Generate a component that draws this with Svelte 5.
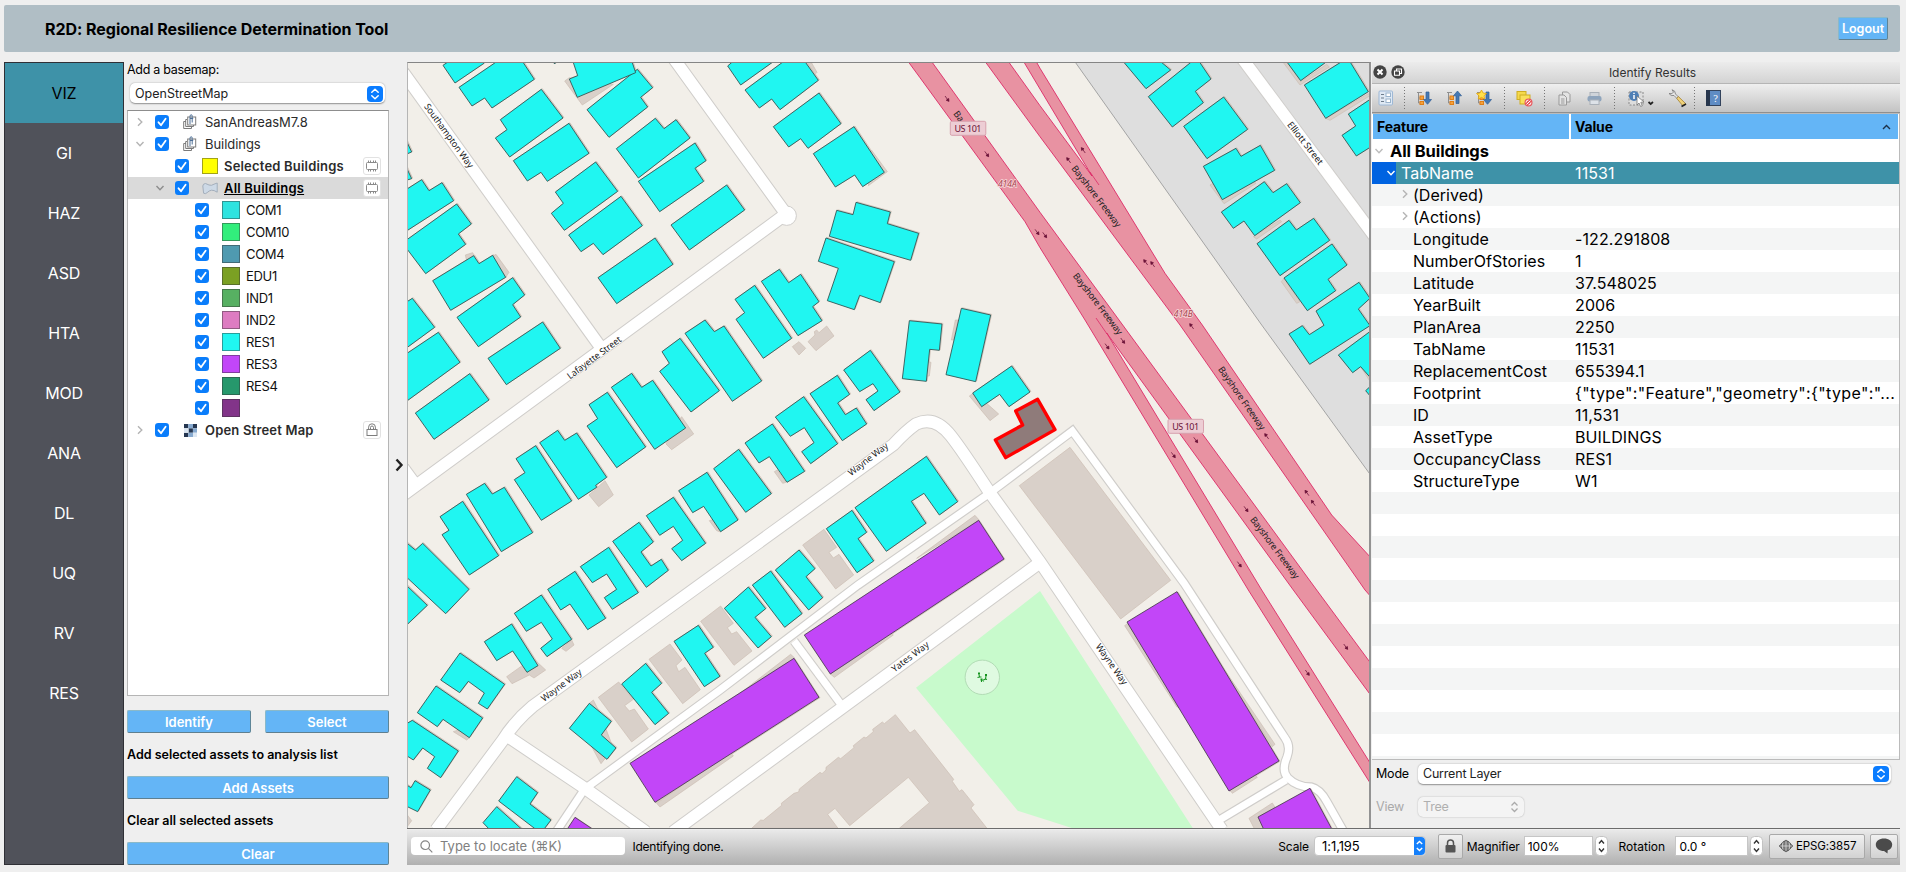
<script>
  const nav = ['VIZ', 'GI', 'HAZ', 'ASD', 'HTA', 'MOD', 'ANA', 'DL', 'UQ', 'RV', 'RES'];

  const layers = [
    { name: 'SanAndreasM7.8', depth: 0, arrow: 'right', icon: 'group' },
    { name: 'Buildings', depth: 0, arrow: 'down', icon: 'group' },
    { name: 'Selected Buildings', depth: 1, swatch: '#ffff00', small: true, bold: true, badge: 'chip' },
    { name: 'All Buildings', depth: 1, arrow: 'down', icon: 'poly', bold: true, active: true, badge: 'chip' },
    { name: 'COM1', depth: 2, swatch: '#2ee3e0' },
    { name: 'COM10', depth: 2, swatch: '#32ee7c' },
    { name: 'COM4', depth: 2, swatch: '#4f9ab0' },
    { name: 'EDU1', depth: 2, swatch: '#7ba023' },
    { name: 'IND1', depth: 2, swatch: '#57b062' },
    { name: 'IND2', depth: 2, swatch: '#dd7cc1' },
    { name: 'RES1', depth: 2, swatch: '#20f6f1' },
    { name: 'RES3', depth: 2, swatch: '#c246f8' },
    { name: 'RES4', depth: 2, swatch: '#26986c' },
    { name: '', depth: 2, swatch: '#823489' },
    { name: 'Open Street Map', depth: 0, arrow: 'right', icon: 'raster', bold: true, badge: 'lock' }
  ];

  const attributes = [
    ['(Derived)', '', true], ['(Actions)', '', true],
    ['Longitude', '-122.291808'], ['NumberOfStories', '1'], ['Latitude', '37.548025'],
    ['YearBuilt', '2006'], ['PlanArea', '2250'], ['TabName', '11531'],
    ['ReplacementCost', '655394.1'],
    ['Footprint', '{"type":"Feature","geometry":{"type":"...'],
    ['ID', '11,531'], ['AssetType', 'BUILDINGS'], ['OccupancyClass', 'RES1'], ['StructureType', 'W1']
  ];
  const blanks = Array.from({ length: 13 });

  // Map sheets: each has an origin in map pixels, points are in thirds of a pixel.
  const sheets = [
    { x: 400, y: 55, res1: [
      '129,31 145,20 255,20 252,25 165,84', '177,97 290,20 368,20 403,73 276,159 254,129 216,153',
      '424,103 489,189 329,306 286,249 321,224 301,194', '507,205 567,295 442,379 423,352 382,378 340,317',
      '587,321 653,409 493,526 454,475 490,445 466,411', '663,424 727,512 609,599 580,565 543,590 506,540',
      '765,549 819,628 650,746 594,668', '712,43 758,98 722,127 743,156 627,247 561,164',
      '519,20 533,62 508,72 532,127 707,53 696,20', '766,190 792,221 828,194 870,249 715,369 649,281',
      '885,264 918,317 885,340 911,379 779,470 715,379', '980,390 1034,465 868,585 813,510',
      '18,255 35,291 18,298', '18,335 35,371 18,376', '18,404 65,374 87,407 126,383 161,437 18,529',
      '170,447 214,507 175,537 197,568 77,656 18,578 18,556', '221,602 237,626 278,601 317,667 152,766 98,677',
      '338,668 374,720 338,749 362,786 235,875 171,787', '18,742 37,730 104,817 18,880', '459,20 469,20 464,27'
    ], tan: ['494,78 508,68 640,88 547,150', '288,598 327,652 317,667 275,605', '196,600 218,593 224,604 200,618'] },
    { x: 400, y: 320, res1: [
      '18,102 115,37 180,127 18,245', '46,279 209,161 267,240 102,358', '264,115 428,6 481,85 319,194',
      '120,590 188,544 296,707 208,765 126,644 147,631', '199,523 254,490 277,522 313,502 398,638 304,695',
      '348,416 407,377 515,543 424,601 343,479 375,458', '419,368 473,331 494,361 530,339 620,472 587,496 590,502 535,538',
      '567,254 622,217 737,381 650,443 561,318 593,296', '634,202 695,160 725,202 758,181 857,324 764,388',
      '786,95 840,55 958,212 873,276 779,154 808,130', '855,40 915,0 943,35 972,18 1085,183 997,244',
      '18,667 46,690 68,670 207,808 137,881 18,770', '836,512 921,457 1014,600 962,635 911,559 878,578',
      '941,446 1016,388 1114,521 1037,577', '739,587 820,532 917,670 845,722 815,686 848,661 820,619 779,646',
      '638,664 717,607 760,666 723,696 753,738 784,718 805,751 739,802',
      '541,740 626,682 715,818 637,868 613,833 650,808 620,762 577,788',
      '443,808 525,754 617,895 563,929 510,852 482,870'
    ], tan: ['567,525 615,482 640,525 596,560', '798,372 845,290 881,342 815,389', '928,602 940,598 962,636 950,632'] },
    { x: 400, y: 580, res1: [
      '18,15 82,76 18,137', '343,100 424,45 515,178 441,230 422,205 457,177 424,127 379,154',
      '253,185 335,132 414,257 381,277 338,213 290,242',
      '180,219 314,313 262,387 235,370 253,339 205,304 179,338 122,300',
      '108,318 248,414 208,473 129,418 112,440 52,398',
      '18,432 37,421 175,513 122,593 82,565 104,530 68,504 40,540 18,526',
      '18,614 33,623 45,602 91,630 53,695 18,678', '350,590 413,638 390,672 453,720 430,750 410,750 296,663',
      '290,680 368,750 270,750 249,728', '568,370 634,424 604,465 648,504 621,538 508,445',
      '737,250 785,310 755,337 806,400 765,434 665,312', '895,136 940,202 914,220 960,289 913,320 822,184'
    ], res3: ['690,550 1182,235 1257,352 765,667', '525,712 582,750 500,750'], tan: [
      '595,352 656,306 700,358 674,377 688,393 703,387 745,447 695,486',
      '747,238 810,192 846,240 828,257 836,275 855,262 901,329 848,371',
      '902,124 962,78 1000,130 982,143 995,162 1010,155 1056,213 1002,256',
      '320,290 365,258 383,275 405,240 437,270 402,294 388,285 336,311', '568,370 580,360 600,400 640,505 603,551 575,500',
      '770,670 780,681 1000,528 990,515', '1020,340 1172,223 1185,235', '160,455 200,480 210,472 175,450',
      '18,700 35,722 18,745', '485,205 498,214 522,195 515,180'
    ] },
    { x: 720, y: 55, res1: [
      '23,33 38,20 160,20 62,90', '75,105 190,20 255,20 295,76 180,164 155,132 118,159',
      '297,114 363,206 264,280 242,251 206,276 160,215', '402,215 493,352 428,395 404,360 346,396 280,296',
      '408,442 511,471 502,506 596,535 572,616 328,544 350,466 399,479',
      '318,549 523,620 481,743 419,721 403,764 322,737 355,640 295,619',
      '45,733 104,691 215,850 130,910 48,793 74,773', '124,679 178,643 206,683 242,658 297,740 278,755 306,797 234,842'
    ], tan: ['262,22 275,24 291,52 285,58', '455,286 502,350 445,392'] },
    { x: 720, y: 320, res1: [
      '75,369 157,312 254,454 201,487 148,410 117,429', '166,291 251,230 353,371 272,431 245,395 282,368 253,323 211,349',
      '270,221 352,166 389,223 353,249 376,284 409,264 440,312 367,362',
      '371,150 451,91 540,216 462,272 438,239 474,213 459,191 419,215',
      '568,2 666,12 658,91 629,88 619,184 547,176', '724,-35 812,-15 767,185 678,164',
      '758,219 875,138 930,216 867,260 839,223 785,260',
      '405,563 619,409 713,545 658,585 612,520 574,544 618,610 499,694',
      '319,626 396,571 440,637 414,656 461,723 411,758', '166,750 237,690 285,746 258,770 308,833 266,870'
    ], res3: ['253,945 776,601 852,717 331,1062'], tan: [
      '217,80 237,65 257,85 237,105', '264,65 285,45 283,35 290,30 297,38 320,18 342,48 288,92',
      '748,228 760,220 783,262 800,250 836,282 810,302', '248,675 312,628 350,682 327,697 340,714 357,703 401,765 347,807',
      '590,715 765,586 778,601', '331,1062 343,1072 520,945 500,935', '163,455 172,450 198,487 188,490',
      '622,125 633,127 628,168 619,168', '694,60 706,0 715,0 700,60'
    ] },
    { x: 720, y: 580, res1: [
      '13,85 85,21 137,86 105,112 154,170 114,204', '97,15 152,-27 246,101 194,142'
    ], tan: [
      '95,745 122,720 130,721 185,676 184,670 222,640 236,636 238,627 300,577 306,581 318,570 318,562 355,532 362,536 402,503 400,497 432,471 438,474 460,455 458,448 487,426 493,431 526,404 570,459 584,449 701,598 697,604 718,634 726,629 762,674 753,684 801,745 538,745 628,668 565,592 389,737 345,685 323,703 354,745'
    ] },
    { x: 1040, y: 55, res1: [
      '250,20 362,20 392,45 318,101', '325,125 455,20 478,20 513,72 466,109 490,143 397,216',
      '551,126 623,223 501,311 431,214', '490,334 588,280 603,304 661,271 704,346 547,434',
      '673,380 699,413 740,386 781,443 644,542 612,498 580,520 544,471', '747,496 769,525 821,490 869,556 720,662 651,566',
      '876,567 921,630 864,673 887,707 802,767 732,669',
      '957,682 990,730 955,762 990,812 809,928 747,837 787,812 808,839 852,811 828,768',
      '740,20 860,20 782,77', '793,90 905,20 930,20 985,110 857,190', '992,132 925,177 947,213 906,241 949,303 992,276'
    ], tan: [
      '728,20 742,20 782,80 860,28 868,36 780,90', '510,390 520,385 547,434 640,380 648,385 552,446', '724,680 732,670 780,740 770,745',
      '857,190 985,116 990,122 870,196', '640,545 650,552 725,500 720,495'
    ] },
    { x: 1040, y: 320, res1: ['992,33 895,105 938,158 962,140 992,174', '992,198 977,212 992,230'],
      tan: ['90,382 392,781 242,897 -62,497', '962,140 990,172 990,184'] },
    { x: 1040, y: 580, res3: ['411,35 717,543 567,633 261,126', '810,625 877,750 672,750 654,711'], tan: [
      '254,137 264,130 420,385 410,380', '500,190 705,493 697,500', '570,630 645,585 652,592 577,640', '627,715 697,669 705,682 655,712 680,750 645,750'
    ] }
  ];
  const place = (s) => `translate(${s.x} ${s.y}) scale(.33333)`;

  const wideRoads = [
    'M395 61L599 345', 'M672 56L786 214L395 501', 'M398 461L417 487', 'M1236 50L1375 237',
    'M436 830L503 740Q514 722 533 706L893 445Q906 431 916 424Q935 415 951 436Q962 450 988 490L1040 562L1222 830',
    'M507 736L586 789L646 832', 'M673 832L1038 564'
  ];
  const thinRoads = [
    'M586 788L720 690L858 585L987 495L1072.3 431L1184 583L1285 738Q1291 746 1287 757Q1281 771 1288 778Q1297 787 1311 787Q1320 789 1327 802L1344 832',
    'M584 790L556 832', 'M794 641L840 703', 'M1286 780L1216 822'
  ];
  const motorway = [
    '907,60 920,77.7 1025,221.7 1040,247.7 1085,320 1248.3,590 1372,786 1372,766 1261.7,590 1106.7,333 1293.3,590 1372,697 1372,665 1316.7,590 1122.7,325 1040,212.3 930.5,60',
    '984,60 1040,136.7 1180,325 1365,590 1372,598 1372,559 1331.7,515 1202.3,325 1165,273.3 1040,68.3 1035.3,60 1022.7,60 1040,89 1092,176 1040,105.7 1007.3,60'
  ];
  const down = [[947, 98.7], [986.7, 154], [1037, 232], [1044.7, 235], [1122.7, 340.7], [1107, 346.3], [1195.7, 440], [1173.3, 455], [1246, 509], [1239.3, 564.3], [1345.7, 646.7], [1307.3, 672.7]];
  const up = [[1083.3, 150.3], [1068.7, 160.3], [1145.7, 262.3], [1152.7, 264.3], [1191.7, 326.3], [1266.7, 436.3], [1307, 493], [1313.3, 503]];
  const labels = [
    ['Southampton Way', 448.5, 136, 54, 77], ['Lafayette Street', 594.5, 358, -36.5, 65],
    ['Wayne Way', 561.7, 685.5, -36.5, 48], ['Wayne Way', 868.3, 459.5, -37.5, 48], ['Wayne Way', 1111.3, 664.5, 55, 48],
    ['Yates Way', 910.5, 657, -37, 44], ['Elliott Street', 1305, 143.5, 52, 52],
    ['Bayshore Freeway', 1096, 196.5, 52.5, 75], ['Bayshore Freeway', 1097.5, 304, 52.5, 75],
    ['Bayshore Freeway', 1241.5, 398.5, 55, 75], ['Bayshore Freeway', 1274.5, 548, 53, 75]
  ];
</script>

{#snippet stepper()}
  <svg class="step" width="13" height="20" viewBox="0 0 13 20"><rect x=".5" y=".5" width="12" height="19" rx="4" fill="#fff" stroke="#c2c2c2" /><path d="M4 7.5L6.5 4.5L9 7.5M4 12.5L6.5 15.5L9 12.5" fill="none" stroke="#333" stroke-width="1.4" /></svg>
{/snippet}
{#snippet updown()}
  <svg class="updown" width="16" height="16" viewBox="0 0 16 16"><rect width="16" height="16" rx="4" fill="#0a7cff" /><path d="M4.8 6.3L8 3.3L11.2 6.3M4.8 9.7L8 12.7L11.2 9.7" fill="none" stroke="#fff" stroke-width="1.5" stroke-linecap="round" stroke-linejoin="round" /></svg>
{/snippet}
{#snippet chevron(dir, color)}
  <svg width="10" height="10" viewBox="0 0 10 10"><path d={dir === 'down' ? 'M1.5 3L5 6.8L8.5 3' : 'M3 1.2L6.8 5L3 8.8'} fill="none" stroke={color} stroke-width="1.4" /></svg>
{/snippet}

<div class="app">
  <header><h1>R2D: Regional Resilience Determination Tool</h1><button class="blue logout">Logout</button></header>

  <div class="main">
    <nav>
      {#each nav as item, i}<div class="tab" class:on={i === 0}>{item}</div>{/each}
    </nav>

    <section class="side">
      <div class="cap">Add a basemap:</div>
      <div class="combo base"><span>OpenStreetMap</span>{@render updown()}</div>
      <div class="tree">
        {#each layers as l}
          <div class="layer d{l.depth}" class:active={l.active}>
            <span class="tw">{#if l.arrow}{@render chevron(l.arrow, l.active ? '#8d8d8d' : '#b4b4b4')}{/if}</span>
            <svg class="check" width="14" height="14" viewBox="0 0 14 14"><rect width="14" height="14" rx="3.3" fill="#0a7dfb" /><path d="M3.5 7.3L6 10.2L10.6 3.8" fill="none" stroke="#fff" stroke-width="1.8" stroke-linecap="round" stroke-linejoin="round" /></svg>
            <span class="ic">
              {#if l.swatch}
                <i class="sw" class:small={l.small} style:background={l.swatch}></i>
              {:else if l.icon === 'group'}
                <svg width="14" height="16" viewBox="0 0 14 16" fill="none" stroke="#7b7b7b"><path d="M3 7.5H.7V14.5H8.5V12.5M4 5.5H2.7V12.5H10.5V11" /><rect x="4.7" y="3" width="8" height="8" fill="#fff" /><path d="M7 10V2.3Q7 .8 8.2 .8T9.2 2.3V8.5M7 4.5H10.2" stroke="#4d6f96" /></svg>
              {:else if l.icon === 'poly'}
                <svg width="16" height="13" viewBox="0 0 16 13"><path d="M.8 4Q1 1.6 3.5 1.5L7 3Q9.5 4 12 2.2L15.2 1V10.2Q12 8 9.5 8.2Q7 8.6 5.2 10.6Q3.4 12.4 1.6 11.2Z" fill="#cdd9e6" stroke="#a3aebb" /></svg>
              {:else}
                <svg width="13" height="13" viewBox="0 0 13 13"><path fill="#253650" d="M0 0h4.3v4.3H0zM9 0h4v4.3H9zM4.5 4.3h4.4v4.4H4.5zM0 8.7h4.3V13H0z" /><path fill="#86a9cf" d="M4.3 0H9v4.3H4.3zM9 4.3h4v4.4H9zM4.3 8.7H9V13H4.3z" /><path fill="#dbe6f2" d="M0 4.3h4.5v4.4H0zM9 8.7h4V13H9z" /></svg>
              {/if}
            </span>
            <span class="nm" class:bold={l.bold}>{l.name}</span>
            {#if l.badge}
              <span class="badge">
                {#if l.badge === 'chip'}
                  <svg width="14" height="12" viewBox="0 0 14 12" fill="none" stroke="#8a8a8a"><rect x="1.5" y="2.5" width="11" height="7" rx="1" /><path d="M3.500 2.500V.5M5.500 2.500V.5M8.500 2.500V.5M10.500 2.500V.5M3.500 9.500V11.500M5.500 9.500V11.500M8.500 9.500V11.500M10.500 9.500V11.500" /></svg>
                {:else}
                  <svg width="12" height="14" viewBox="0 0 12 14" fill="none" stroke="#7d7d7d"><rect x="1" y="6.500" width="10" height="6" /><path d="M2.600 6V4.200A3.400 3.400 0 0 1 9.400 4.200V6M4.500 6V4.500A1.500 1.500 0 0 1 7.500 4.500V6" /></svg>
                {/if}
              </span>
            {/if}
          </div>
        {/each}
      </div>
      <div class="pair"><button class="blue">Identify</button><button class="blue">Select</button></div>
      <div class="note">Add selected assets to analysis list</div>
      <button class="blue">Add Assets</button>
      <div class="note">Clear all selected assets</div>
      <button class="blue">Clear</button>
    </section>

    <div class="split"><svg width="9" height="14" viewBox="0 0 9 14"><path d="M1.5 1.5L6.5 7L1.5 12.5" fill="none" stroke="#222" stroke-width="2.4" /></svg></div>

    <section class="work">
      <div class="upper">
        <svg class="map" viewBox="408 63 961 765" width="961" height="765">
          <rect x="400" y="55" width="980" height="790" fill="#f2efe9" />
          <path d="M1073 59L1261.7 325L1372 477V55Z" fill="#dedede" stroke="#a5a5a5" />
          <path d="M916 687.7L1040 591L1194 830H1078L1050 821L1017.7 810.7Z" fill="#c8facc" />
          {#each wideRoads as d}<path {d} class="wide case" />{/each}
          {#each thinRoads as d}<path {d} class="thin case" />{/each}
          <circle cx="786.7" cy="215.7" r="9.7" fill="#fff" stroke="#cfcdca" />
          {#each wideRoads as d}<path {d} class="wide" />{/each}
          {#each thinRoads as d}<path {d} class="thin" />{/each}
          {#each motorway as p}<polygon points={p} class="mw" />{/each}
          <path d="M1096 318L1107 334M1090 172L1099 185" stroke="#dc2a67" stroke-width=".8" />
          {#each sheets as s}
            <g transform={place(s)} class="osm">
              {#each s.res1 ?? [] as p}<polygon points={p} transform="translate(3 -2)" />{/each}
              {#each s.res3 ?? [] as p}<polygon points={p} transform="translate(3 1)" />{/each}
              {#each s.tan ?? [] as p}<polygon points={p} />{/each}
            </g>
          {/each}
          {#each sheets as s}
            <g transform={place(s)}>
              {#each s.res1 ?? [] as p}<polygon points={p} class="bld res1" />{/each}
              {#each s.res3 ?? [] as p}<polygon points={p} class="bld res3" />{/each}
            </g>
          {/each}
          <g transform="translate(720 320) scale(.33333)"><polygon points="887,273 953,238 1005,329 857,413 826,360 908,315" fill="#8f7b7a" stroke="#f00" stroke-width="10" stroke-linejoin="round" /></g>
          <circle cx="982.3" cy="677.3" r="17.2" fill="#dffae1" stroke="#b2dcb5" />
          <path d="M978 672.500h2v2h-2zM985 674h2v2h-2zM980.500 678.500h2v2h-2z" fill="#15931f" />
          <path d="M979 674.500L979.500 677L977.500 677.500M979.500 677L981.500 677M986 676L985.500 679L982.500 680.500M985.500 679L987 679.500M981.500 680V682M983.500 681.500V679.500" fill="none" stroke="#15931f" stroke-width="1.100" />
          {#each down as [x, y]}<path d="M-3.300 0H3M.800 -1.500L3.300 0L.800 1.500Z" class="arr" transform="translate({x} {y}) rotate(54)" />{/each}
          {#each up as [x, y]}<path d="M-3.300 0H3M.800 -1.500L3.300 0L.800 1.500Z" class="arr" transform="translate({x} {y}) rotate(-126)" />{/each}
          <text x="958.7" y="119.500" class="lab" transform="rotate(54 958.700 116.500)">Ba</text>
          {#each labels as [t, x, y, r, w]}<text textLength={w} class="lab" class:halo={!t.startsWith('Bay')} transform="translate({x} {y}) rotate({r})" dy="2.700">{t}</text>{/each}
          <text x="1007.300" y="186.500" class="exit">414A</text><text x="1183.300" y="316.500" class="exit">414B</text>
          {#each [[950.300, 121.300], [1168, 419.300]] as [x, y]}
            <rect {x} {y} width="35.500" height="14" rx="1.500" fill="#edcdd4" stroke="#d8a2ae" />
            <text x={x + 17.700} y={y + 10.500} class="ref" textLength="27">US 101</text>
          {/each}
        </svg>

        <aside>
          <div class="ptitle">
            <svg width="32" height="14" viewBox="0 0 32 14"><circle cx="7" cy="7" r="6.700" fill="#444" /><path d="M4.500 4.500L9.500 9.500M9.500 4.500L4.500 9.500" stroke="#fff" stroke-width="2" /><circle cx="25" cy="7" r="6.700" fill="#444" /><path d="M23.500 6V4H28.500V8.500H26.500M21.500 6H26.500V10.200H21.500Z" fill="none" stroke="#fff" stroke-width="1.100" /></svg>
            <span>Identify Results</span>
          </div>
          <div class="tools">
            <span class="c first"><svg width="16" height="16" viewBox="0 0 16 16"><rect x="1" y="1" width="13.500" height="14" rx="1" fill="#dfe9f4" stroke="#9db8d6" /><path d="M3 4.500H6M3 8H6M3 11.500H6" stroke="#6c7c8c" stroke-width="1.200" /><rect x="8" y="3" width="4.500" height="3.500" fill="#fff" stroke="#9ab3cc" /><rect x="8" y="9" width="4.500" height="3.500" fill="#fff" stroke="#9ab3cc" /></svg></span>
            <i class="s"></i>
            {#each ['down', 'up', 'star'] as k}
              <span class="c"><svg width="16" height="16" viewBox="0 0 16 16"><path d="M1 2.500H6M2.500 2.500V13M2.500 8H5M2.500 13H5" stroke="#8f8f8f" fill="none" /><rect x="4" y="6" width="3.500" height="3.500" fill="#f5a13c" stroke="#e07f16" /><rect x="4" y="11.500" width="3.500" height="3" fill="#f5a13c" stroke="#e07f16" /><path d={k === 'up' ? 'M11.500 1L15.500 5.800H13V13.500H10V5.800H7.500Z' : 'M10 2H13V9.500H15.500L11.500 14.300L7.500 9.500H10Z'} fill="#4579b4" stroke="#315f96" stroke-width=".7" />{#if k === 'star'}<path d="M5.500 0L7.100 3L10.500 3.500L8 5.800L8.700 9L5.500 7.400L2.300 9L3 5.800L.5 3.500L3.900 3Z" fill="#ffe04a" stroke="#e5a50a" stroke-width=".8" />{/if}</svg></span>
            {/each}
            <i class="s"></i>
            <span class="c"><svg width="17" height="17" viewBox="0 0 17 17"><rect x="1" y="1.500" width="9" height="8" fill="#f5d94c" stroke="#cfae22" /><rect x="4" y="5" width="10" height="9" fill="#f9e05b" stroke="#cfae22" /><circle cx="12.500" cy="12.500" r="4" fill="#e9575c" /><path d="M10.500 14.500L14.500 10.500M10 12.500A2.500 2.500 0 0 1 12.500 10M15 12.500A2.500 2.500 0 0 1 12.500 15" stroke="#fff" fill="none" /></svg></span>
            <i class="s"></i>
            <span class="c"><svg width="13" height="15" viewBox="0 0 13 15" stroke="#999" fill="#e3e3e3"><path d="M4.500 1H9.500L12 3.500V11H4.500Z" /><path d="M1 4H6L8.500 6.500V14H1Z" /><path d="M3 8H6.500M3 10H6.500M3 12H6.500" /></svg></span>
            <span class="c"><svg width="15" height="13" viewBox="0 0 15 13"><rect x="3" y=".5" width="9" height="4" fill="#cfd4da" stroke="#a9b0b8" /><rect x=".5" y="4" width="14" height="5.500" rx="2" fill="#8ea4bc" /><rect x="3" y="8" width="9" height="4.500" fill="#dde2e8" stroke="#a9b0b8" /></svg></span>
            <i class="s"></i>
            <span class="c w40"><svg width="28" height="17" viewBox="0 0 28 17"><rect x="1" y="2" width="14" height="13" fill="#ddd" stroke="#888" stroke-dasharray="2 1.500" /><circle cx="6" cy="6" r="5" fill="#4f7fb5" /><path d="M6 5V9M6 2.700V4" stroke="#fff" stroke-width="1.500" /><path d="M9 6L16 12L12.800 12.300L14.300 15.800L12.500 16.400L11 13L9 15Z" fill="#fff" stroke="#777" stroke-width=".8" /><path d="M20.500 12L22.700 14L25 12" fill="none" stroke="#222" stroke-width="1.700" /></svg></span>
            <span class="c"><svg width="19" height="19" viewBox="0 0 19 19"><path d="M1 4.500Q3 7.500 6 6.500L9.500 10L11 8.500L7.500 5Q7.500 1.500 4 .8L5.500 3L4 4.700Z" fill="#e5e5e5" stroke="#777" stroke-width=".8" /><path d="M10.300 7.500L17.500 14.500L15 17L8.800 9.500Z" fill="#f0d27a" stroke="#a3802f" stroke-width=".8" /><path d="M13.500 17.500L18 15" stroke="#222" stroke-width="1.700" /></svg></span>
            <i class="s last"></i>
            <span class="c"><svg width="15" height="16" viewBox="0 0 15 16"><rect x=".5" y=".5" width="14" height="15" fill="#5f8cc4" stroke="#33435c" /><rect x="0" y="0" width="4" height="16" fill="#27364d" /><text x="9.400" y="12" text-anchor="middle" font-size="10.500" fill="#fff" font-family="Liberation Serif, serif">?</text></svg></span>
          </div>
          <div class="table">
            <div class="thead"><span class="k">Feature</span><span class="v">Value<svg width="9" height="6" viewBox="0 0 9 6"><path d="M1 5L4.500 1.500L8 5" fill="none" stroke="#1c3148" stroke-width="1.400" /></svg></span></div>
            <div class="root">{@render chevron('down', '#bdbdbd')}<b>All Buildings</b></div>
            <div class="row sel"><span class="k"><i>{@render chevron('down', '#fff')}</i>TabName</span><span class="v">11531</span></div>
            {#each attributes as [k, v, open]}
              <div class="row"><span class="k">{#if open}<em>{@render chevron('right', '#b5b5b5')}</em>{/if}{k}</span><span class="v" class:json={v.startsWith('{')}>{v}</span></div>
            {/each}
            {#each blanks as _}<div class="row"></div>{/each}
          </div>
          <div class="mode"><label for="mode">Mode</label><div class="combo" id="mode"><span>Current Layer</span>{@render updown()}</div></div>
          <div class="mode off"><label for="view">View</label><div class="combo tiny" id="view"><span>Tree</span><svg width="9" height="12" viewBox="0 0 9 12"><path d="M1.500 4.500L4.500 1.500L7.500 4.500M1.500 7.500L4.500 10.500L7.500 7.500" fill="none" stroke="#aaa" stroke-width="1.300" /></svg></div></div>
        </aside>
      </div>

      <footer>
        <div class="search"><svg width="13" height="13" viewBox="0 0 13 13" fill="none" stroke="#858585" stroke-width="1.200"><circle cx="5.200" cy="5.200" r="4.300" /><path d="M8.400 8.400L12.300 12.300" /></svg><span>Type to locate (⌘K)</span></div>
        <span class="msg">Identifying done.</span>
        <span class="scale">Scale</span>
        <div class="field sc"><span>1:1,195</span><svg width="11" height="18" viewBox="0 0 11 18"><path d="M0 0H7Q11 0 11 4V14Q11 18 7 18H0Z" fill="#1580fb" /><path d="M2.800 7L5.500 4.500L8.200 7M2.800 11L5.500 13.500L8.200 11" fill="none" stroke="#fff" stroke-width="1.400" /></svg></div>
        <div class="tb lock"><svg width="11" height="14" viewBox="0 0 11 14"><rect x=".5" y="6" width="10" height="7.500" rx="1" fill="#555" /><path d="M2.500 6V4A3 3 0 0 1 8.500 4V6" fill="none" stroke="#555" stroke-width="1.500" /></svg></div>
        <span class="mag">Magnifier</span>
        <div class="field mg">100%</div>{@render stepper()}
        <span class="rot">Rotation</span>
        <div class="field rt">0.0 °</div>{@render stepper()}
        <div class="tb epsg"><svg width="16" height="16" viewBox="0 0 16 16" fill="none" stroke="#555"><path d="M1 8L8 2L15 8L8 14Z" fill="#bbb" stroke="#777" /><circle cx="8" cy="8" r="5" fill="#777" /><path d="M3 8H13M8 3V13M5 4.500Q3.500 8 5 11.500M11 4.500Q12.500 8 11 11.500" stroke="#ddd" stroke-width=".8" /></svg>EPSG:3857</div>
        <div class="tb chat"><svg width="18" height="16" viewBox="0 0 18 16"><path d="M9 .5C4.300 .5 .8 3 .8 6.700S4.300 13 9 13L12.500 15.500L12.700 12.300C15.500 11.300 17.200 9.300 17.200 6.700C17.200 3 13.700 .5 9 .5Z" fill="#4b4b4b" /></svg></div>
      </footer>
    </section>
  </div>
</div>

<style>
  :global(body) { background: #efefef; }
  .app { width: 1906px; height: 872px; box-sizing: border-box; padding: 5px 6px 0 4px; overflow: hidden; font: 13px Inter, "Liberation Sans", sans-serif; color: #000; letter-spacing: -0.2px; }
  header { height: 47px; background: #b0bec5; border-radius: 2px; display: flex; align-items: center; justify-content: space-between; padding: 0 8px 0 41px; }
  h1 { margin: 0; font-size: 16px; font-weight: 700; letter-spacing: -0.04px; }
  .blue { display: block; box-sizing: border-box; height: 23px; padding: 0; background: #64b5f6; color: #fff; font: 600 13px Inter, sans-serif; letter-spacing: 0; border: 1px solid #8ab9c9; border-right-color: #5e8597; border-bottom-color: #5e7f90; border-radius: 2px; }
  .logout { width: 50px; margin-right: 4px; font-size: 12.5px; }
  .main { display: flex; margin-top: 10px; height: 803px; }
  nav { width: 120px; box-sizing: border-box; background: #50525a; border: 1px solid #2f3036; color: #fff; }
  .tab { height: 60px; display: flex; align-items: center; justify-content: center; font-size: 16px; }
  .tab.on { background: #3e92a8; color: #000; }
  .side { width: 262px; margin-left: 3px; display: flex; flex-direction: column; }
  .cap { height: 16px; line-height: 16px; font-size: 12.5px; letter-spacing: -0.28px; }
  .combo { display: flex; align-items: center; justify-content: space-between; background: #fff; border-radius: 5px; box-shadow: 0 .5px 1.500px rgba(0, 0, 0, .4); height: 20px; padding: 0 2px 0 5px; box-sizing: border-box; }
  .base { margin: 5px 4px 7px 3px; font-size: 12.5px; padding-top: 1px; color: #222; letter-spacing: 0; }
  .tree { height: 586px; box-sizing: border-box; background: #fff; border: 1px solid #b5b5b5; border-top-color: #8d8d8d; }
  .layer { height: 22px; display: flex; align-items: center; padding-right: 7px; }
  .layer.d1 { padding-left: 20px; }
  .layer.d2 { padding-left: 40px; }
  .active { background: #dadada; }
  .tw { width: 27px; padding-left: 7px; box-sizing: border-box; height: 10px; line-height: 0; }
  .ic { width: 20px; margin-left: 11px; display: flex; align-items: center; justify-content: center; height: 20px; }
  .check { flex: none; }
  .d2 .ic { margin-left: 12px; }
  .sw { width: 18px; height: 18px; box-sizing: border-box; border: 1px solid rgba(50, 50, 50, .45); }
  .sw.small { width: 16px; height: 16px; }
  .nm { flex: 1; padding-left: 5px; color: #2b2b2b; white-space: nowrap; letter-spacing: -0.05px; }
  .d1 .nm { padding-left: 4px; }
  .d2 .nm { padding-left: 5px; color: #111; letter-spacing: -0.3px; }
  .nm.bold { font-weight: 600; letter-spacing: .19px; }
  .active .nm { text-decoration: underline; color: #000; }
  .badge { width: 18px; height: 18px; background: #fff; border: 1px solid #e2e2e2; border-radius: 3px; box-sizing: border-box; display: flex; align-items: center; justify-content: center; }
  .pair { display: flex; gap: 14px; margin-top: 14px; }
  .pair .blue { flex: 1; }
  .note { height: 43px; line-height: 43px; font-weight: 600; font-size: 12.5px; letter-spacing: 0; }
  .split { width: 18px; display: flex; align-items: center; justify-content: flex-end; box-sizing: border-box; padding: 2px 3px 0 0; }
  .work { flex: 1; min-width: 0; }
  .upper { display: flex; height: 767px; border-bottom: 1px solid #6c6c6c; box-sizing: border-box; }
  .map { display: block; flex: none; border: 1px solid #b5b5b5; border-top-color: #858585; border-right: 2px solid #939393; border-bottom: 0; box-sizing: content-box; }
  .case.wide { stroke: #cfcdca; stroke-width: 13.5; }
  .case.thin { stroke: #cfcdca; stroke-width: 9.5; }
  .wide { fill: none; stroke: #fff; stroke-width: 11.5; }
  .thin { fill: none; stroke: #fff; stroke-width: 7.2; }
  .mw { fill: #e892a2; stroke: #dc2a67; stroke-width: .9; }
  .osm { fill: #d9d0c9; stroke: #cbbdb2; stroke-width: 2; }
  .bld { stroke: #33514f; stroke-width: 2.6; }
  .res1 { fill: #20f6f1; }
  .res3 { fill: #c246f8; stroke: #4a3a50; }
  .arr { fill: #6b1238; stroke: #6b1238; stroke-width: .7; }
  .lab { font: 9.2px "Noto Sans", sans-serif; fill: #222; text-anchor: middle; letter-spacing: 0; }
  .halo { stroke: #fff; stroke-width: 1.5; paint-order: stroke; }
  .exit { font: italic 8.5px "Noto Sans", sans-serif; fill: #a8434f; stroke: #f7d5d8; stroke-width: 1.6; paint-order: stroke; text-anchor: middle; letter-spacing: 0; }
  .ref { font: 9px "Noto Sans", sans-serif; fill: #6b1238; text-anchor: middle; letter-spacing: 0; }
  aside { flex: 1; min-width: 0; padding-left: 1px; display: flex; flex-direction: column; }
  .ptitle { height: 22px; box-sizing: border-box; background: linear-gradient(#ececec, #d3d3d3); border-bottom: 1px solid #b5b5b5; display: flex; align-items: center; }
  .ptitle svg { margin-left: 1px; margin-top: -2px; }
  .ptitle span { flex: 1; text-align: center; font-size: 12px; color: #333; letter-spacing: 0; }
  .tools { height: 29px; box-sizing: border-box; background: linear-gradient(#efefef, #c3c3c3); border-bottom: 1px solid #8f8f8f; display: flex; align-items: center; }
  .c { width: 30px; display: flex; justify-content: center; }
  .c.first { width: 27px; }
  .c.w40 { width: 46px; }
  .w40 + .c { width: 24px; }
  .s { width: 10px; height: 22px; background: repeating-linear-gradient(#777 0 1px, transparent 1px 3px) 5px 0 / 1px 100% no-repeat; }
  .s.last { margin-right: -1px; }
  .table { height: 647px; box-sizing: border-box; background: #fff; border: 1px solid #bbb; border-width: 1px 1px 1px 0; overflow: hidden; }
  .thead { display: flex; gap: 2px; height: 25px; font: 700 14px/25px Inter, sans-serif; margin: 0 1px; letter-spacing: -0.15px; }
  .thead span { background: #64b5f6; padding-left: 4px; box-sizing: border-box; }
  .thead .k { width: 196px; }
  .thead .v { flex: 1; display: flex; justify-content: space-between; align-items: center; padding-right: 7px; }
  .root { height: 23px; display: flex; align-items: center; font-size: 16.5px; gap: 6px; padding-left: 2px; letter-spacing: -0.1px; }
  .row { height: 22px; display: flex; line-height: 22px; font-size: 16px; letter-spacing: .03px; white-space: nowrap; }
  .row:nth-child(even) { background: #f4f5f5; }
  .row:nth-child(odd) { background: #fff; }
  .row .k { width: 203px; padding-left: 41px; box-sizing: border-box; position: relative; }
  .row .v { letter-spacing: .12px; }
  .row .v.json { letter-spacing: .37px; }
  .row em { position: absolute; left: 28px; top: 5px; line-height: 0; }
  .row.sel { background: #3e92a8; color: #fff; }
  .sel .k { padding-left: 0; display: flex; }
  .sel i { width: 24px; margin-right: 5px; background: #0063e1; display: flex; align-items: center; justify-content: flex-end; }
  .mode { display: flex; align-items: center; margin-top: 3px; padding: 0 9px 0 4px; height: 21px; font-size: 12.5px; }
  .mode label { width: 42px; }
  .mode .combo { flex: 1; color: #222; }
  .mode.off { margin-top: 12px; color: #aaa; }
  .mode .tiny { flex: none; width: 106px; color: #b0b0b0; background: #f4f4f4; box-shadow: 0 0 1.500px rgba(0, 0, 0, .3); padding-right: 5px; }
  footer { height: 35px; margin-top: 1px; background: linear-gradient(#e9e9e9, #b0b0b0); display: flex; align-items: center; font-size: 12px; padding: 0 2px 3px 4px; box-sizing: border-box; letter-spacing: 0; }
  .search { width: 214px; height: 18px; border-radius: 4px; background: #fff; display: flex; align-items: center; color: #808080; font-size: 13px; padding-left: 9px; gap: 7px; box-sizing: border-box; }
  .msg { width: 646px; padding-left: 8px; box-sizing: border-box; letter-spacing: -0.27px; }
  .scale { width: 44px; margin-left: 9px; letter-spacing: -0.1px; }
  .field { background: #fff; height: 20px; box-sizing: border-box; border: 1px solid #c6c6c6; display: flex; align-items: center; justify-content: space-between; padding-left: 3px; }
  .field.sc { width: 112px; margin-left: -8px; border-radius: 4px; font-size: 13px; padding-left: 7px; letter-spacing: -0.1px; }
  .tb { height: 25px; box-sizing: border-box; border: 1px solid #a9a9a9; border-radius: 2px; background: linear-gradient(#f0f0f0, #d2d2d2); display: flex; align-items: center; justify-content: center; }
  .lock { width: 25px; margin-left: 12px; }
  .mag { width: 57px; margin-left: 4px; letter-spacing: -0.1px; }
  .mg { width: 69px; }
  .step { margin-left: 2px; }
  .rot { width: 57px; margin-left: 11px; letter-spacing: 0; }
  .rt { width: 73px; }
  .epsg { width: 96px; margin-left: 6px; gap: 2px; font-size: 11.5px; letter-spacing: -0.1px; }
  .chat { width: 28px; margin-left: 5px; }
</style>
